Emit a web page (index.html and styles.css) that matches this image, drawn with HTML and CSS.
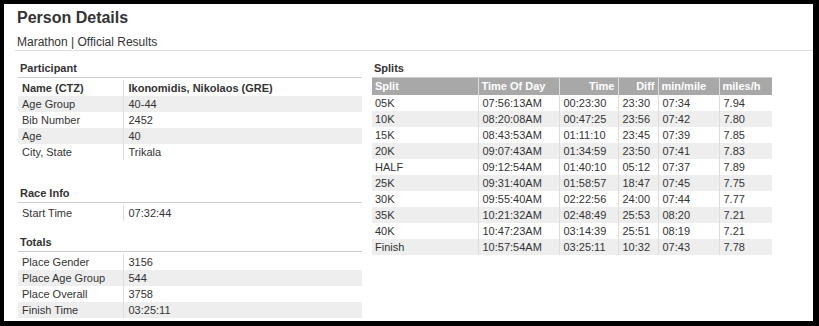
FILE: index.html
```html
<!DOCTYPE html>
<html>
<head>
<meta charset="utf-8">
<link rel="stylesheet" href="styles.css">
</head>
<body>
<div class="frame">
  <header class="page-head">
    <h1 class="title">Person Details</h1>
    <div class="subtitle">Marathon | Official Results</div>
  </header>
  <div class="content">
    <div class="col-left">
      <section class="block">
        <h2 class="block-title">Participant</h2>
        <table class="kv kv-participant">
          <colgroup><col class="c-label"><col></colgroup>
          <tr class="bold"><td>Name (CTZ)</td><td class="v">Ikonomidis, Nikolaos (GRE)</td></tr>
          <tr><td>Age Group</td><td class="v">40-44</td></tr>
          <tr><td>Bib Number</td><td class="v">2452</td></tr>
          <tr><td>Age</td><td class="v">40</td></tr>
          <tr><td>City, State</td><td class="v">Trikala</td></tr>
        </table>
      </section>
      <section class="block">
        <h2 class="block-title">Race Info</h2>
        <table class="kv">
          <colgroup><col class="c-label"><col></colgroup>
          <tr><td>Start Time</td><td class="v">07:32:44</td></tr>
        </table>
      </section>
      <section class="block">
        <h2 class="block-title">Totals</h2>
        <table class="kv">
          <colgroup><col class="c-label"><col></colgroup>
          <tr><td>Place Gender</td><td class="v">3156</td></tr>
          <tr><td>Place Age Group</td><td class="v">544</td></tr>
          <tr><td>Place Overall</td><td class="v">3758</td></tr>
          <tr><td>Finish Time</td><td class="v">03:25:11</td></tr>
        </table>
      </section>
    </div>
    <div class="col-right">
      <section class="block">
        <h2 class="block-title">Splits</h2>
        <table class="splits">
          <colgroup>
            <col class="w-split"><col class="w-tod"><col class="w-time"><col class="w-diff"><col class="w-mm"><col class="w-mph">
          </colgroup>
          <thead>
            <tr><th>Split</th><th>Time Of Day</th><th class="r">Time</th><th class="r">Diff</th><th>min/mile</th><th>miles/h</th></tr>
          </thead>
          <tbody>
            <tr><td>05K</td><td>07:56:13AM</td><td>00:23:30</td><td>23:30</td><td>07:34</td><td>7.94</td></tr>
            <tr><td>10K</td><td>08:20:08AM</td><td>00:47:25</td><td>23:56</td><td>07:42</td><td>7.80</td></tr>
            <tr><td>15K</td><td>08:43:53AM</td><td>01:11:10</td><td>23:45</td><td>07:39</td><td>7.85</td></tr>
            <tr><td>20K</td><td>09:07:43AM</td><td>01:34:59</td><td>23:50</td><td>07:41</td><td>7.83</td></tr>
            <tr><td>HALF</td><td>09:12:54AM</td><td>01:40:10</td><td>05:12</td><td>07:37</td><td>7.89</td></tr>
            <tr><td>25K</td><td>09:31:40AM</td><td>01:58:57</td><td>18:47</td><td>07:45</td><td>7.75</td></tr>
            <tr><td>30K</td><td>09:55:40AM</td><td>02:22:56</td><td>24:00</td><td>07:44</td><td>7.77</td></tr>
            <tr><td>35K</td><td>10:21:32AM</td><td>02:48:49</td><td>25:53</td><td>08:20</td><td>7.21</td></tr>
            <tr><td>40K</td><td>10:47:23AM</td><td>03:14:39</td><td>25:51</td><td>08:19</td><td>7.21</td></tr>
            <tr><td>Finish</td><td>10:57:54AM</td><td>03:25:11</td><td>10:32</td><td>07:43</td><td>7.78</td></tr>
          </tbody>
        </table>
      </section>
    </div>
  </div>
</div>
</body>
</html>
```

FILE: styles.css
```css
html, body {
  margin: 0;
  padding: 0;
  background: #000;
}
body {
  font-family: "Liberation Sans", Arial, sans-serif;
  color: #333;
}
.frame {
  margin: 4px 6px 5px 4px;
  height: 317px;
  background: #fff;
  overflow: hidden;
}
.page-head {
  margin-left: 11px;
  padding: 4px 0 0 2px;
  border-bottom: 1px solid #ddd;
}
.title {
  margin: 0;
  font-size: 16px;
  line-height: 20px;
  font-weight: bold;
  color: #333;
}
.subtitle {
  margin-top: 6px;
  font-size: 12px;
  line-height: 16px;
  color: #333;
}
.content {
  display: flex;
  gap: 10px;
  padding: 10px 0 0 14px;
}
.col-left {
  width: 344px;
}
.col-right {
  width: 400px;
}
.block {
  margin-bottom: 14px;
}
.block-title {
  margin: 0;
  padding: 0 0 2px 2px;
  font-size: 11px;
  line-height: 14px;
  font-weight: bold;
  color: #333;
  border-bottom: 1px solid #ccc;
}
.kv {
  width: 100%;
  margin-top: 2px;
  border-collapse: collapse;
  table-layout: fixed;
  font-size: 11px;
}
.kv-participant {
  margin-bottom: 26px;
}
.c-label {
  width: 105px;
}
.kv td {
  height: 16px;
  padding: 0 4px;
  line-height: 16px;
  white-space: nowrap;
}
.kv td.v {
  border-left: 1px solid #ddd;
  padding-left: 5px;
}
.kv tr:nth-child(even) {
  background: #eee;
}
.kv tr.bold td {
  font-weight: bold;
}
.splits {
  width: 400px;
  border-collapse: collapse;
  table-layout: fixed;
  font-size: 11px;
}
.w-split { width: 106px; }
.w-tod { width: 81px; }
.w-time { width: 59px; }
.w-diff { width: 40px; }
.w-mm { width: 61px; }
.w-mph { width: 53px; }
.splits th {
  height: 17px;
  padding: 0 3px;
  line-height: 17px;
  background: #a8a8a8;
  color: #fff;
  font-weight: bold;
  text-align: left;
  border-left: 1px solid #ddd;
  white-space: nowrap;
}
.splits th.r {
  text-align: right;
}
.splits th:first-child,
.splits td:first-child {
  border-left: none;
}
.splits td {
  height: 16px;
  padding: 0 4px;
  line-height: 16px;
  border-left: 1px solid #ddd;
  white-space: nowrap;
}
.splits td:first-child {
  padding-left: 3px;
}
.splits tbody tr:nth-child(even) {
  background: #eee;
}
```
